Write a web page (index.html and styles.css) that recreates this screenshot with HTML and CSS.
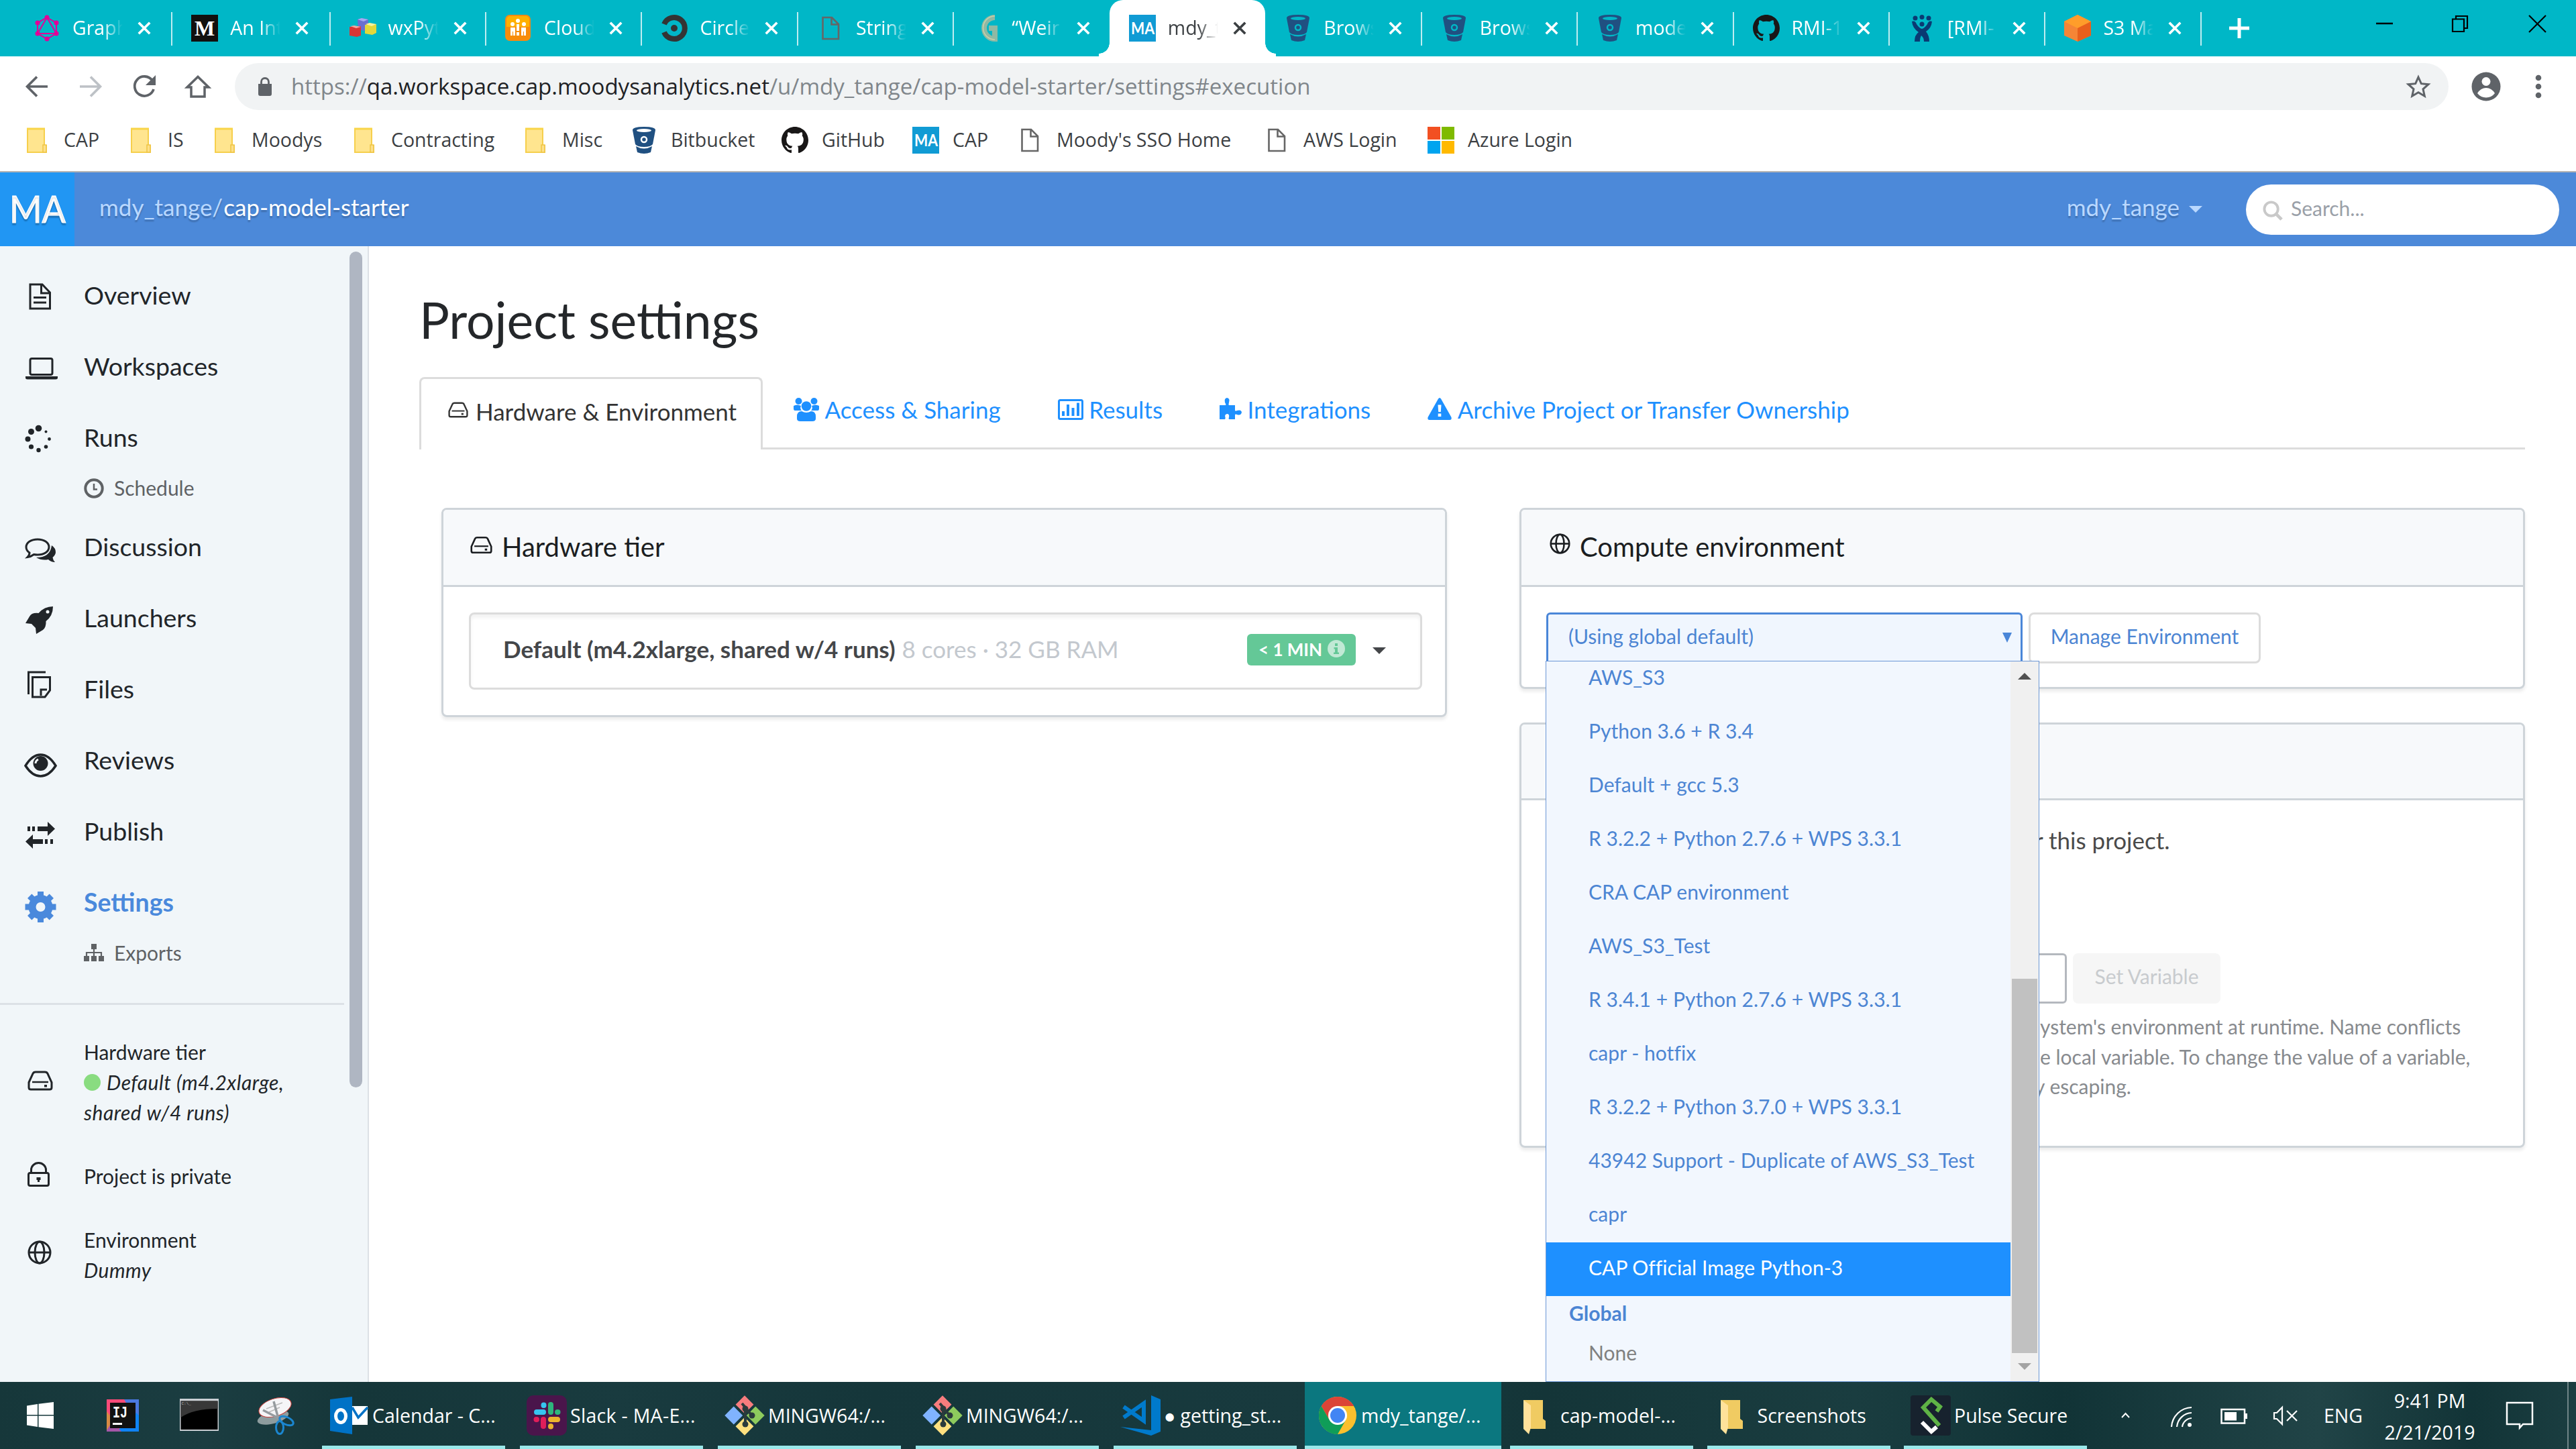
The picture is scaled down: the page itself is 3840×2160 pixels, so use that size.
FILE: index.html
```html
<!DOCTYPE html>
<html lang="en">
<head>
<meta charset="utf-8">
<title>mdy_tange/cap-model-starter</title>
<link rel="stylesheet" href="styles.css">
</head>
<body>
<svg class="sprite" aria-hidden="true">
  <symbol id="close" viewBox="0 0 24 24"><path d="M3 3L21 21M21 3L3 21" fill="none" stroke="currentColor" stroke-width="4"/></symbol>
  <symbol id="page" viewBox="0 0 40 40"><path d="M8.5 4H22L32 14V36H8.5ZM21.500 4V14.500H32" fill="none" stroke="#666" stroke-width="2.600"/></symbol>
  <symbol id="bucket" viewBox="0 0 40 40"><path fill="#205081" d="M3 5Q3 0 20 0T37 5L33 26Q30 30 20 30T7 26Z"/><ellipse cx="20" cy="5.500" rx="11" ry="2.500" fill="var(--hole)"/><circle cx="20" cy="19" r="4" fill="none" stroke="var(--hole)" stroke-width="2.500"/><path fill="#205081" d="M8 29Q20 36 32 29L30 38Q20 42 10 38Z"/></symbol>
  <symbol id="github" viewBox="0 0 16 16"><path fill="#191717" d="M8 0C3.58 0 0 3.580 0 8c0 3.540 2.290 6.530 5.470 7.590.4.070.55-.17.55-.38 0-.19-.01-.82-.01-1.490-2.010.37-2.530-.49-2.690-.94-.09-.23-.48-.94-.82-1.130-.28-.15-.68-.52-.01-.53.63-.01 1.080.58 1.230.82.72 1.210 1.870.87 2.330.66.070-.52.28-.87.51-1.070-1.780-.2-3.640-.89-3.640-3.950 0-.87.31-1.590.82-2.150-.08-.2-.36-1.020.08-2.120 0 0 .67-.21 2.200.82.64-.18 1.320-.27 2-.27s1.360.09 2 .27c1.530-1.040 2.200-.82 2.200-.82.44 1.100.16 1.920.08 2.120.51.56.82 1.270.82 2.150 0 3.070-1.870 3.750-3.650 3.950.29.25.54.73.54 1.480 0 1.070-.01 1.930-.01 2.200 0 .21.15.46.55.38A8.010 8.010 0 0 0 16 8c0-4.420-3.580-8-8-8z"/></symbol>
  <symbol id="ma" viewBox="0 0 40 40"><path fill="#109bd4" d="M0 0H40V40H0Z"/><text x="3" y="29" font-family="Lato,sans-serif" font-weight="bold" font-size="24" fill="#fff" textLength="35" lengthAdjust="spacingAndGlyphs">MA</text></symbol>
  <symbol id="folder" viewBox="0 0 40 40"><path d="M6 3H31V28H34V38H6Z" fill="#ffe58f" stroke="#f6cf4c" stroke-width="2"/><path d="M5 3H32" stroke="#f9d548" stroke-width="3"/><path d="M29 27H34V38H29Z" fill="#fde08a" stroke="#efc545" stroke-width="1.500"/></symbol>
  <symbol id="hdd" viewBox="0 0 38 30"><path d="M2 17.500L8 4.500Q9 2 12 2H26Q29 2 30 4.500L36 17.500V25Q36 28 33 28H5Q2 28 2 25Z" fill="none" stroke="currentColor" stroke-width="3"/><path d="M7 17H31" stroke="currentColor" stroke-width="2.500"/><path d="M25 21H29V24.500H25Z" fill="currentColor"/></symbol>
  <symbol id="globe" viewBox="0 0 36 36"><g fill="none" stroke="currentColor" stroke-width="3"><circle cx="18" cy="18" r="16"/><ellipse cx="18" cy="18" rx="7" ry="16"/><path d="M2 18H34"/></g></symbol>
  <symbol id="git" viewBox="0 0 60 60"><g transform="rotate(45 30 30)"><path d="M9 9H28V28H9Z" fill="#f77c7e"/><path d="M32 9H51V28H32Z" fill="#8ecb5d"/><path d="M9 32H28V51H9Z" fill="#80b3ff"/><path d="M32 32H51V51H32Z" fill="#ffe07f"/></g><path d="M26 12L31 18V44M31 19L40 29" stroke="#2b3a3c" stroke-width="4" fill="none"/><g fill="#2b3a3c"><circle cx="31" cy="20" r="4.500"/><circle cx="41" cy="30" r="4.500"/><circle cx="31" cy="43" r="4.500"/></g></symbol>
  <symbol id="winfolder" viewBox="0 0 60 60"><path d="M10 7H39V35L43 38V50H14Z" fill="#f0cb62"/><path d="M10 7L21 15V48L18 58L10 50Z" fill="#ffe29b"/></symbol>
</svg>

<header class="tabs">
  <div class="tab wide"><svg viewBox="0 0 40 40"><g fill="none" stroke="#e10098" stroke-width="2"><path d="M20 4L34 12V28L20 36L6 28V12ZM20 4L34 28H6Z"/></g><g fill="#e10098"><circle cx="20" cy="4" r="3.500"/><circle cx="34" cy="12" r="3.500"/><circle cx="34" cy="28" r="3.500"/><circle cx="20" cy="36" r="3.500"/><circle cx="6" cy="28" r="3.500"/><circle cx="6" cy="12" r="3.500"/></g></svg><span class="name">Graph</span><svg class="x"><use href="#close"/></svg></div>
  <div class="tab wide"><svg viewBox="0 0 40 40"><path fill="#12100e" d="M0 0H40V40H0Z"/><text x="20" y="31" text-anchor="middle" font-family="Liberation Serif,serif" font-weight="bold" font-size="32" fill="#fff">M</text></svg><span class="name">An Int</span><svg class="x"><use href="#close"/></svg></div>
  <div class="tab"><svg viewBox="0 0 40 40"><path fill="#6a6fd0" d="M12 7L18 5L28 7V21L21 24L13 21Z"/><path fill="#a5a9f0" d="M12 7L18 5L28 7L21 10Z"/><path fill="#d93535" d="M0 18L17 17V31L11 33L0 31Z"/><path fill="#f4a7a0" d="M1 17L7 16L17 18L10 20Z"/><path fill="#e2d83a" d="M23 15L40 14V27L34 30L23 28Z"/><path fill="#f6f2a0" d="M24 14L30 12L40 14L33 17Z"/></svg><span class="name">wxPyt</span><svg class="x"><use href="#close"/></svg></div>
  <div class="tab"><svg viewBox="0 0 40 40"><rect x="1" y="1" width="36" height="37" rx="6" fill="#ffb000" stroke="#f58a12" stroke-width="2"/><path fill="#f78c0a" d="M2 18H36V30Q36 37 30 37H8Q2 37 2 30Z"/><g fill="#fff"><circle cx="19" cy="9" r="3"/><circle cx="11" cy="14" r="3"/><circle cx="28" cy="14" r="3"/><path d="M17 14H21V24H17ZM8 19H15V31H12V25H11V31H8ZM24 19H31V31H28V25H27V31H24ZM17 26H21V31H17Z"/></g></svg><span class="name">Cloud</span><svg class="x"><use href="#close"/></svg></div>
  <div class="tab"><svg viewBox="0 0 40 40"><path d="M5 14A16 16 0 1 1 5 26" fill="none" stroke="#343434" stroke-width="8"/><circle cx="20" cy="20" r="5" fill="#343434"/></svg><span class="name">Circle</span><svg class="x"><use href="#close"/></svg></div>
  <div class="tab"><svg><use href="#page"/></svg><span class="name">String</span><svg class="x"><use href="#close"/></svg></div>
  <div class="tab"><svg viewBox="0 0 40 40"><path d="M33 4A16 16 0 1 0 33 36V20H24" fill="none" stroke="#8fb9a4" stroke-width="8"/><path d="M33 2A17 17 0 0 0 33 37" fill="none" stroke="#c9cfa9" stroke-width="1.500"/></svg><span class="name">“Weir</span><svg class="x"><use href="#close"/></svg></div>
  <div class="tab active"><svg><use href="#ma"/></svg><span class="name">mdy_t</span><svg class="x"><use href="#close"/></svg></div>
  <div class="tab"><svg><use href="#bucket"/></svg><span class="name">Brows</span><svg class="x"><use href="#close"/></svg></div>
  <div class="tab"><svg><use href="#bucket"/></svg><span class="name">Brows</span><svg class="x"><use href="#close"/></svg></div>
  <div class="tab"><svg><use href="#bucket"/></svg><span class="name">mode</span><svg class="x"><use href="#close"/></svg></div>
  <div class="tab"><svg><use href="#github"/></svg><span class="name">RMI-1</span><svg class="x"><use href="#close"/></svg></div>
  <div class="tab"><svg viewBox="0 0 40 40"><g fill="#0a3a73"><circle cx="10" cy="5" r="3.500"/><circle cx="20" cy="3.500" r="3.500"/><circle cx="30" cy="5" r="3.500"/><path d="M5 10Q10 8 12 14Q16 20 20 21Q24 20 28 14Q30 8 35 10Q34 20 26 25Q31 31 31 40H23Q23 34 19 31Q17 34 17 40H9Q9 30 15 26Q6 20 5 10Z"/><circle cx="20" cy="14" r="3.500"/></g></svg><span class="name">[RMI-</span><svg class="x"><use href="#close"/></svg></div>
  <div class="tab"><svg viewBox="0 0 40 40"><path fill="#f58536" d="M0 10L20 0L40 10V31L20 40L0 31Z"/><path fill="#ff9d2a" d="M0 10L20 0L40 10L20 20Z"/><path fill="#e8601c" d="M20 20L40 10V31L20 40Z"/></svg><span class="name">S3 Ma</span><svg class="x"><use href="#close"/></svg></div>
  <svg class="newtab" viewBox="0 0 32 32"><path d="M16 1V31M1 16H31" stroke="#fff" stroke-width="5"/></svg>
  <svg class="winctl" viewBox="0 0 260 84"><path d="M3 35H28" stroke="#000" stroke-width="2.500"/><path d="M117 28.500H134V47H117ZM122 28V24H139V42H135" fill="none" stroke="#000" stroke-width="2.200"/><path d="M231 23L256 48M256 23L231 48" stroke="#000" stroke-width="2.200"/></svg>
</header>

<nav class="toolbar">
  <svg class="tool" viewBox="0 0 60 60"><path d="M46 30H16M30 15.500L15.500 30L30 44.500" fill="none" stroke="#5f6368" stroke-width="3.600"/></svg>
  <svg class="tool" viewBox="0 0 60 60"><path d="M14 30H44M30 15.500L44.500 30L30 44.500" fill="none" stroke="#bdc1c6" stroke-width="3.600"/></svg>
  <svg class="tool" viewBox="0 0 60 60"><path d="M42 21A14.500 14.500 0 1 0 44 34" fill="none" stroke="#5f6368" stroke-width="3.800"/><path d="M47 13V28H32Z" fill="#5f6368"/></svg>
  <svg class="tool" viewBox="0 0 60 60"><path d="M14 31H20V45H40V31H46L30 15.500Z" fill="none" stroke="#5f6368" stroke-width="3.500"/></svg>
  <div class="omnibox">
    <svg class="lock" viewBox="0 0 20 28"><path d="M0 10H20V25Q20 28 17 28H3Q0 28 0 25Z" fill="#5f6368"/><path d="M4.500 11V7A5.500 5.500 0 0 1 15.500 7V11" fill="none" stroke="#5f6368" stroke-width="2.800"/></svg>
    <span class="url">https://<b>qa.workspace.cap.moodysanalytics.net</b>/u/mdy_tange/cap-model-starter/settings#execution</span>
    <svg class="star" viewBox="0 0 36 36"><path d="M18 4L22.300 13.700L33 14.700L25 21.800L27.300 32.200L18 26.700L8.700 32.200L11 21.800L3 14.700L13.700 13.700Z" fill="none" stroke="#5f6368" stroke-width="3"/></svg>
  </div>
  <svg class="profile" viewBox="0 0 44 44"><circle cx="22" cy="22" r="21.500" fill="#5f6368"/><circle cx="22" cy="14.500" r="6.500" fill="#fff"/><path d="M9 32Q14 24 22 24T35 32Q30 38.500 22 38.500T9 32Z" fill="#fff"/></svg>
  <svg class="dots" viewBox="0 0 10 36"><g fill="#5f6368"><circle cx="5" cy="5" r="4.300"/><circle cx="5" cy="18" r="4.300"/><circle cx="5" cy="31" r="4.300"/></g></svg>
</nav>

<nav class="bookmarks">
  <span><svg><use href="#folder"/></svg>CAP</span>
  <span><svg><use href="#folder"/></svg>IS</span>
  <span><svg><use href="#folder"/></svg>Moodys</span>
  <span><svg><use href="#folder"/></svg>Contracting</span>
  <span><svg><use href="#folder"/></svg>Misc</span>
  <span><svg><use href="#bucket"/></svg>Bitbucket</span>
  <span><svg><use href="#github"/></svg>GitHub</span>
  <span><svg><use href="#ma"/></svg>CAP</span>
  <span><svg><use href="#page"/></svg>Moody's SSO Home</span>
  <span><svg><use href="#page"/></svg>AWS Login</span>
  <span><svg viewBox="0 0 40 40"><path fill="#f25022" d="M0 0H19V19H0Z"/><path fill="#7fba00" d="M21 0H40V19H21Z"/><path fill="#00a4ef" d="M0 21H19V40H0Z"/><path fill="#ffb900" d="M21 21H40V40H21Z"/></svg>Azure Login</span>
</nav>

<header class="appbar">
  <div class="logo"><svg viewBox="0 0 111 110"><text x="14" y="75" font-family="Lato,sans-serif" font-size="56" fill="#fff" stroke="#fff" stroke-width="1.200" textLength="84" lengthAdjust="spacingAndGlyphs">MA</text></svg></div>
  <div class="crumb">mdy_tange/<b>cap-model-starter</b></div>
  <div class="user">mdy_tange<i class="caret"></i></div>
  <div class="search"><svg viewBox="0 0 32 32"><circle cx="13" cy="13" r="10.500" fill="none" stroke="#c9c9c9" stroke-width="4"/><path d="M20 20L29 29" stroke="#c9c9c9" stroke-width="5"/></svg><span>Search...</span></div>
</header>

<div class="page">
  <aside class="side">
    <ul class="menu">
      <li><svg viewBox="0 0 60 60"><path d="M15 14H33L44.500 26V50H15ZM31.500 14V27H44.500M20 33.500H39M20 41H39" fill="none" stroke="currentColor" stroke-width="3"/></svg>Overview</li>
      <li><svg viewBox="0 0 60 60"><rect x="15" y="18.500" width="33" height="24" rx="2.500" fill="none" stroke="currentColor" stroke-width="3"/><path d="M8 45H56V47Q56 49.500 53 49.500H11Q8 49.500 8 47Z" fill="currentColor"/></svg>Workspaces</li>
      <li><svg viewBox="0 0 60 60" fill="currentColor"><circle cx="27.500" cy="16.500" r="4.800"/><circle cx="16.500" cy="21.500" r="4.500"/><circle cx="11.500" cy="32.500" r="4"/><circle cx="16.500" cy="44" r="3.600"/><circle cx="27.500" cy="49" r="3.200"/><circle cx="38.500" cy="44" r="2.800"/><circle cx="43.500" cy="32.500" r="2.400"/><circle cx="38.500" cy="21.500" r="2"/></svg>Runs</li>
      <li class="sub"><svg viewBox="0 0 30 30"><circle cx="15" cy="15" r="12.700" fill="none" stroke="currentColor" stroke-width="4"/><path d="M15 8V16.500H20" fill="none" stroke="currentColor" stroke-width="2.500"/></svg>Schedule</li>
      <li><svg viewBox="0 0 60 60"><path d="M26 19C36 19 43 24 43 30.500S36 42 26 42Q23 42 20.500 41.500Q16 45 11 45.500Q14 42.500 14 39Q9 35.500 9 30.500C9 24 16 19 26 19Z" fill="none" stroke="currentColor" stroke-width="3"/><path d="M47 28Q53 32 53 38Q53 42 48.500 46Q49 50 52 53Q46 53 42 49Q32 51 24 46Q45 46 47 28Z" fill="currentColor"/></svg>Discussion</li>
      <li><svg viewBox="0 0 60 60"><path fill="currentColor" d="M49 13Q36 13 27.500 23Q17 22 14 28L8 38L17 39L23 45L24 54L34 48Q39 44 38.500 35Q49 27 49 13Z"/><circle cx="41" cy="21" r="2.500" fill="#f1f6f9"/></svg>Launchers</li>
      <li><svg viewBox="0 0 60 60"><path d="M12.500 38V5H38M18.500 12.500H44.500V32L37 42H18.500ZM31 40V31H40" fill="none" stroke="currentColor" stroke-width="3"/></svg>Files</li>
      <li><svg viewBox="0 0 60 60"><path d="M8 38.500Q18 22 30.500 22T53 38.500Q43 54 30.500 54T8 38.500Z" fill="none" stroke="currentColor" stroke-width="3.500"/><circle cx="30.500" cy="35" r="11" fill="currentColor"/><path d="M23 35Q23 31 27 29" stroke="#f1f6f9" stroke-width="3" fill="none"/></svg>Reviews</li>
      <li><svg viewBox="0 0 60 60" fill="currentColor"><path d="M26 23H41V16L52 26.500L41 37V30H26ZM18 23H22V30H18ZM11 23H15V30H11ZM34 42H19V35L8 45.500L19 56V49H34ZM37 42H41V49H37ZM45 42H49V49H45Z"/></svg>Publish</li>
      <li class="current"><svg viewBox="0 0 60 60"><circle cx="30.500" cy="37" r="12.500" fill="none" stroke="currentColor" stroke-width="11"/><g stroke="currentColor" stroke-width="9"><path d="M30.500 14V22M30.500 52V60M7.500 37H15M46 37H53.500M14.200 20.700L20 26.500M41 47.500L46.800 53.300M46.800 20.700L41 26.500M20 47.500L14.200 53.300"/></g></svg>Settings</li>
      <li class="sub"><svg viewBox="0 0 30 30"><path fill="currentColor" d="M11 1H19V9H11ZM0 19H8V27H0ZM11 19H19V27H11ZM22 19H30V27H22Z"/><path d="M15 9V19M4 19V14H26V19" fill="none" stroke="currentColor" stroke-width="2.200"/></svg>Exports</li>
    </ul>
    <ul class="info">
      <li><svg class="i-hdd"><use href="#hdd"/></svg><div>Hardware tier<br><em><i class="ok"></i>Default (m4.2xlarge,<br>shared w/4 runs)</em></div></li>
      <li><svg class="i-lock" viewBox="0 0 33 37"><rect x="1.500" y="16.500" width="30" height="19" rx="2.500" fill="none" stroke="currentColor" stroke-width="3"/><path d="M5.500 16V12A11 10.500 0 0 1 27.500 12V16" fill="none" stroke="currentColor" stroke-width="3"/><path d="M13.500 23H19.500V27H18V30H15V27H13.500Z" fill="currentColor"/></svg><div>Project is private</div></li>
      <li><svg class="i-globe"><use href="#globe"/></svg><div>Environment<br><em>Dummy</em></div></li>
    </ul>
    <div class="thumb"></div>
  </aside>

  <main class="main">
    <h1>Project settings</h1>
    <nav class="sections">
      <a class="on"><svg class="s-hdd"><use href="#hdd"/></svg>Hardware &amp; Environment</a>
      <a><svg class="s-users" viewBox="0 0 38 35" fill="currentColor"><circle cx="7.500" cy="5" r="5"/><circle cx="30.500" cy="5" r="5"/><path d="M0 12Q5 9 11 12Q9 16 12 19H2Q0 19 0 16ZM38 12Q33 9 27 12Q29 16 26 19H36Q38 19 38 16Z"/><circle cx="19" cy="12.500" r="7.300"/><path d="M5 28Q5 20 12 20Q19 24 26 20Q33 20 33 28V31Q33 35 28 35H10Q5 35 5 31Z"/></svg>Access &amp; Sharing</a>
      <a><svg class="s-chart" viewBox="0 0 38 31"><rect x="1.500" y="1.500" width="35" height="28" rx="2" fill="none" stroke="currentColor" stroke-width="3"/><path fill="currentColor" d="M6 18H10V25H6ZM13 8H17V25H13ZM20.500 13H24.500V25H20.500ZM28 5.500H32V25H28Z"/></svg>Results</a>
      <a><svg class="s-puzzle" viewBox="0 0 33 33"><path fill="currentColor" d="M0 11H9Q10 10 8 7Q6.500 1 11 0Q16 1 14 7Q13 10 14 11H23V19Q24 20 26 19Q32 17 33 21.500Q32 27 26 25Q24 24 23 25V32H14Q13 31 14 29Q15 24 11 24Q7 25 8.500 29Q9 31 8 32H0Z"/></svg>Integrations</a>
      <a><svg class="s-warn" viewBox="0 0 36 33"><path fill="currentColor" d="M16 1.500Q18-1.500 20 1.500L35.500 29Q36.500 33 33 33H3Q-.5 33 .5 29Z"/><path fill="#fff" d="M15.500 10.500H20.500L19.800 21H16.200ZM15.700 23.500H20.300V28H15.700Z"/></svg>Archive Project or Transfer Ownership</a>
    </nav>
    <div class="cols">
      <div class="col">
        <section class="card">
          <h2><svg class="c-hdd"><use href="#hdd"/></svg>Hardware tier</h2>
          <div class="body">
            <div class="tier"><b>Default (m4.2xlarge, shared w/4 runs)</b><span class="spec">8 cores · 32 GB RAM</span>
              <span class="badge">&lt; 1 MIN<svg viewBox="0 0 26 26"><circle cx="13" cy="13" r="13" fill="#c1e9d5"/><path fill="#64c897" d="M11 5H15V9H11ZM9.500 11H15V18.500H17V21H9V18.500H11V13.500H9.500Z"/></svg></span><i class="caret"></i></div>
          </div>
        </section>
      </div>
      <div class="col">
        <section class="card compute">
          <h2><svg class="c-globe"><use href="#globe"/></svg>Compute environment</h2>
          <div class="body">
            <div class="select">(Using global default)<i class="tri"></i></div>
            <div class="btn">Manage Environment</div>
          </div>
          <div class="dropdown">
            <ul class="options">
              <li>AWS_S3</li><li>Python 3.6 + R 3.4</li><li>Default + gcc 5.3</li><li>R 3.2.2 + Python 2.7.6 + WPS 3.3.1</li><li>CRA CAP environment</li><li>AWS_S3_Test</li><li>R 3.4.1 + Python 2.7.6 + WPS 3.3.1</li><li>capr - hotfix</li><li>R 3.2.2 + Python 3.7.0 + WPS 3.3.1</li><li>43942 Support - Duplicate of AWS_S3_Test</li><li>capr</li><li class="hot">CAP Official Image Python-3</li><li class="group">Global</li><li class="none">None</li>
            </ul>
            <div class="bar"><i class="up"></i><i class="grip"></i><i class="down"></i></div>
          </div>
        </section>
        <section class="card vars">
          <h2></h2>
          <div class="body">
            <p class="lead">r this project.</p>
            <div class="form"><div class="input"></div><div class="setvar">Set Variable</div></div>
            <p class="help"><span>ystem's environment at runtime. Name conflicts</span><span>e local variable. To change the value of a variable,</span><span>y escaping.</span></p>
          </div>
        </section>
      </div>
    </div>
  </main>
</div>

<footer class="taskbar">
  <svg class="t-start" viewBox="0 0 40 40"><path fill="#fff" d="M0 5.500L16 3V19H0ZM17.500 2.800L40 0V19H17.500ZM0 20.500H16V37L0 34.500ZM17.500 20.500H40V40L17.500 37.200Z"/></svg>
  <svg class="t-ij" viewBox="0 0 48 48"><path fill="#fc4a78" d="M0 0H48V48H0Z"/><path fill="#4b78e0" d="M26 0H48V48H14L40 24Z"/><path fill="#0f83f5" d="M44 20L48 24V48H16Z"/><path fill="#d78a45" d="M0 18L10 30L4 48H0Z"/><path fill="#a557a8" d="M0 46L8 34L22 48H0Z"/><path fill="#111" d="M5 5H43V43H5Z"/><text x="9" y="27" font-family="Liberation Mono,monospace" font-weight="bold" font-size="24" fill="#fff" textLength="22" lengthAdjust="spacingAndGlyphs">IJ</text><path fill="#fff" d="M9 35H23V38H9Z"/></svg>
  <svg class="t-cmd" viewBox="0 0 58 48"><path fill="#c9ced3" d="M0 0H58V48H0Z"/><path fill="#000" d="M1.500 3.500H56.500V46H1.500Z"/><path fill="#383838" d="M1.500 3.500H56.500V15Q20 15 1.500 28Z"/><text x="2.500" y="9" font-family="Liberation Mono,monospace" font-size="6" fill="#bbb">C:\_</text></svg>
  <svg class="t-snip" viewBox="0 0 56 56"><ellipse cx="24" cy="30" rx="24" ry="9" transform="rotate(-15 24 30)" fill="#8d9c9e"/><ellipse cx="27" cy="15" rx="25" ry="13" transform="rotate(-18 27 15)" fill="#f5f5f7" stroke="#c9403c" stroke-width="1"/><path d="M14 17L38 8M18 22L34 15" stroke="#bbb" stroke-width="1.500"/><path d="M25 6L32 32M9 19L38 34" stroke="#969b9f" stroke-width="3.500"/><ellipse cx="44" cy="35" rx="11" ry="5.500" transform="rotate(25 44 35)" fill="none" stroke="#1b86d0" stroke-width="3"/><ellipse cx="34" cy="45" rx="5.500" ry="9.500" fill="none" stroke="#1b86d0" stroke-width="3"/></svg>
  <div class="apps">
    <div class="app"><svg viewBox="0 0 60 60"><path fill="#0072c6" d="M2 6L35 2V58L2 53Z"/><path fill="#fff" d="M35 16H58V44H35Z"/><path d="M35 18L44 33L58 18" fill="none" stroke="#0072c6" stroke-width="3.500"/><ellipse cx="18" cy="31" rx="7.500" ry="9.500" fill="none" stroke="#fff" stroke-width="5"/></svg>Calendar - C...</div>
    <div class="app slack"><svg viewBox="0 0 60 60"><rect width="60" height="60" rx="10" fill="#4a154b"/><g stroke-width="8" stroke-linecap="round"><path d="M15 25H25M25.500 14.500V15" stroke="#36c5f0"/><path d="M36 14V25M46 25H46.500" stroke="#2eb67d"/><path d="M36 36H46M36 46V46.500" stroke="#ecb22e"/><path d="M25 36V46M14.500 36H15" stroke="#e01e5a"/></g></svg>Slack - MA-E...</div>
    <div class="app"><svg><use href="#git"/></svg>MINGW64:/...</div>
    <div class="app"><svg><use href="#git"/></svg>MINGW64:/...</div>
    <div class="app"><svg viewBox="0 0 60 60"><path fill="#007acc" d="M46 0L60 6V54L46 60L0 47L46 52Z"/><path d="M5 17L35 38V12L5 33" fill="none" stroke="#007acc" stroke-width="6"/></svg>● getting_st...</div>
    <div class="app open"><svg viewBox="0 0 60 60"><circle cx="30" cy="30" r="28" fill="#fbc02d"/><path fill="#db4437" d="M5.700 16A28 28 0 0 1 54.300 16H30L18 37Z"/><path fill="#0f9d58" d="M5.700 16A28 28 0 0 0 30 58L42 37L18 37Z"/><circle cx="30" cy="30" r="14" fill="#fff"/><circle cx="30" cy="30" r="11" fill="#4285f4"/></svg>mdy_tange/...</div>
    <div class="app"><svg><use href="#winfolder"/></svg>cap-model-...</div>
    <div class="app"><svg><use href="#winfolder"/></svg>Screenshots</div>
    <div class="app"><svg viewBox="0 0 60 60"><rect width="60" height="60" rx="4" fill="#17222e"/><path d="M39 24L44 17L31 6L19 18L43 45" fill="none" stroke="#5fb346" stroke-width="6"/><path d="M17 40L31 54L39 47" fill="none" stroke="#fff" stroke-width="6"/></svg>Pulse Secure</div>
  </div>
  <svg class="tray" viewBox="3150 2060 290 100" fill="none" stroke="#fff"><path d="M3163 2113L3168.500 2107L3174 2113" stroke-width="2"/><path d="M3237 2127A31 31 0 0 1 3267 2098M3245 2127A23 23 0 0 1 3267 2106M3253 2127A15 15 0 0 1 3267 2114" stroke-width="2.200"/><circle cx="3264" cy="2124" r="3" fill="#fff" stroke="none"/><path d="M3311.500 2101H3346V2121.500H3311.500Z" stroke-width="2.500"/><path d="M3316 2105H3334V2117.500H3316ZM3347 2107H3350V2115H3347Z" fill="#fff" stroke="none"/><path d="M3390 2106H3394L3402 2098V2123L3394 2115H3390ZM3409 2103L3424 2118M3424 2103L3409 2118" stroke-width="2.200"/></svg>
  <span class="lang">ENG</span>
  <span class="clock">9:41 PM<br>2/21/2019</span>
  <svg class="note" viewBox="0 0 40 40"><path d="M1 1H39V33H25L20 38.500V33H1Z" fill="none" stroke="#fff" stroke-width="2.500"/></svg>
  <i class="peek"></i>
</footer>
</body>
</html>
```
FILE: styles.css
```css
* { box-sizing: border-box; }
body { margin: 0; width: 3840px; height: 2160px; overflow: hidden; background: #fff; font-family: Lato, "Open Sans", sans-serif; color: #212529; display: flex; flex-direction: column; }
ul, p, h1, h2 { margin: 0; padding: 0; list-style: none; font-weight: normal; }
svg { display: block; flex: none; overflow: visible; }
.sprite { width: 0; height: 0; position: absolute; }

/* browser tab strip */
.tabs { height: 84px; flex: none; background: #00b7c7; display: flex; padding-left: 21px; font: 28.5px/82px "Open Sans", sans-serif; color: #fff; --hole: #00b7c7; }
.tab { width: 232.45px; height: 84px; flex: none; display: flex; padding-left: 29px; position: relative; }
.tab.wide { width: 235.3px; }
.tab::after { content: ""; position: absolute; right: -1px; top: 18px; width: 2px; height: 50px; background: rgba(255,255,255,.75); }
.tab:nth-child(7)::after, .tab.active::after { display: none; }
.tab > svg:first-child { width: 40px; height: 40px; margin-top: 22px; }
.name { width: 78px; margin-left: 18px; overflow: hidden; white-space: nowrap; -webkit-mask-image: linear-gradient(90deg, #000 58%, transparent 96%); mask-image: linear-gradient(90deg, #000 58%, transparent 96%); }
.x { width: 22px; height: 22px; margin: 31px 0 0 18px; }
.tab.active { background: #fff; border-radius: 20px 20px 0 0; color: #3c4043; }
.tab.active::before { content: ""; position: absolute; z-index: 1; left: -16px; right: -16px; bottom: 0; height: 20px; background: radial-gradient(circle 16px at 0 0, transparent 15.5px, #fff 16px) 0 100% / 16px 20px no-repeat, radial-gradient(circle 16px at 100% 0, transparent 15.5px, #fff 16px) 100% 100% / 16px 20px no-repeat; }
.newtab { width: 32px; height: 32px; margin: 26px 0 0 41px; }
.winctl { width: 260px; height: 84px; margin-left: auto; margin-right: 41px; }

/* address bar */
.toolbar { height: 90px; flex: none; display: flex; align-items: center; padding-left: 25px; }
.tool { width: 60px; height: 60px; margin-right: 20px; }
.omnibox { width: 3300px; height: 70px; margin-left: 5px; border-radius: 35px; background: #f1f3f4; display: flex; align-items: center; padding: 0 27px 0 35px; font: 33.07px/70px "Open Sans", sans-serif; color: #80868b; }
.url { margin-left: 29px; white-space: nowrap; font-variant-ligatures: none; }
.url b { font-weight: normal; color: #202124; }
.lock { width: 20px; height: 28px; }
.star { width: 36px; height: 36px; margin-left: auto; }
.profile { width: 44px; height: 44px; margin-left: 34px; }
.dots { width: 10px; height: 36px; margin-left: 51px; }

.bookmarks { height: 83px; flex: none; border-bottom: 2px solid #b4b4b4; padding: 14px 0 0 35px; display: grid; grid-template-columns: 155px 125px 208px 255px 162px 225px 195px 155px 368px 245px 300px; font: 28.5px/40px "Open Sans", sans-serif; color: #3c4043; font-variant-ligatures: none; --hole: #fff; }
.bookmarks span { display: flex; gap: 20px; white-space: nowrap; }
.bookmarks svg { width: 40px; height: 40px; margin-top: 1px; }

/* application header */
.appbar { height: 110px; flex: none; background: #4c89d9; display: flex; font-size: 35px; line-height: 102px; color: #b9d8ff; text-shadow: 0 3px 2px rgba(0,0,0,.2); }
.logo { width: 111px; background: #2196f3; }
.logo svg { width: 111px; height: 110px; }
.crumb { margin-left: 37px; }
.crumb b { font-weight: normal; color: #fff; margin-left: 1px; }
.user { margin-left: auto; display: flex; }
.caret { border: 10px solid transparent; border-top-color: currentColor; border-bottom: 0; width: 0; height: 0; }
.user .caret { margin: 50px 49px 0 14px; }
.search { width: 467px; height: 75px; margin: 18px 25px 0 16px; border-radius: 38px; background: #fff; display: flex; padding-left: 25px; font-size: 30px; line-height: 71px; color: #9aa0a8; text-shadow: none; }
.search svg { width: 31px; height: 31px; margin: 24px 11px 0 0; }

.page { height: 1693px; flex: none; display: flex; overflow: hidden; }
.side { width: 550px; height: 1693px; flex: none; background: #f1f6f9; border-right: 2px solid #dce1e6; padding-top: 20px; position: relative; }
.thumb { position: absolute; left: 521px; top: 8px; width: 19px; height: 1246px; border-radius: 10px; background: #afb6c2; }
.menu { font-size: 37.5px; line-height: 106px; }
.menu li { height: 106px; padding-left: 30px; display: flex; align-items: center; }
.menu svg { width: 60px; height: 60px; margin-right: 35px; }
.menu .current { font-weight: bold; color: #4a89dc; }
.menu .sub { height: 57px; padding: 0 0 12px 125px; font-size: 30px; line-height: 45px; color: #5f6265; }
.menu .sub svg { width: 30px; height: 30px; margin-right: 15px; }
.info { width: 513px; margin-top: 40px; border-top: 3px solid #dce1e6; padding-top: 48px; font-size: 30px; line-height: 45px; display: grid; gap: 50px; }
.info li { display: grid; grid-template-columns: 125px 1fr; white-space: nowrap; }
.info em { letter-spacing: .5px; }
.info svg { margin-left: 41px; }
.i-hdd { width: 38px; height: 30px; margin-top: 50px; }
.i-lock { width: 33px; height: 37px; margin-top: 1px; }
.i-globe { width: 36px; height: 36px; margin-top: 23px; }
.ok { display: inline-block; width: 25px; height: 25px; border-radius: 50%; background: #89dc80; margin-right: 9px; vertical-align: -1px; }

.main { flex: 1; padding: 0 76px; }
h1 { font-size: 75px; line-height: 90px; margin-top: 64px; margin-left: -1px; color: #24272a; }
.sections { margin-top: 41px; margin-left: -1px; height: 108px; border-bottom: 3px solid #dcdcdc; display: flex; font-size: 35px; line-height: 42px; color: #1e90ff; }
.sections a { display: flex; white-space: nowrap; padding-top: 27px; margin-right: 85px; }
.sections .on { width: 512px; height: 108px; border: 3px solid #dcdcdc; border-bottom: 0; border-radius: 8px 8px 0 0; background: #fff; color: #333; padding: 27px 0 0 40px; margin-right: 46px; }
.sections svg { margin-right: 8.5px; }
.sections .s-hdd { width: 30px; height: 24px; margin: 7px 11px 0 0; }
.s-users { width: 38px; height: 35px; margin-top: 4px; }
.s-chart { width: 38px; height: 31px; margin-top: 6px; }
.s-puzzle { width: 33px; height: 33px; margin-top: 4px; }
.s-warn { width: 36px; height: 33px; margin-top: 4px; }

.cols { display: flex; justify-content: space-between; margin: 87px 0 0 32px; }
.col { width: 1499px; display: flex; flex-direction: column; gap: 50px; }
.card { border: 3px solid #ced4d9; border-radius: 8px; box-shadow: 0 4px 5px rgba(0,0,0,.08); position: relative; }
.card h2 { height: 115px; background: #f7f9fb; border-bottom: 3px solid #ced4d9; border-radius: 5px 5px 0 0; padding: 31px 0 0 40px; font-size: 40px; line-height: 48px; color: #1b1e21; display: flex; }
.c-hdd { width: 33px; height: 27px; margin: 8px 14px 0 0; }
.c-globe { width: 31px; height: 31px; margin: 4px 14px 0 2px; }
.card .body { padding: 38px 38px; display: flex; }
.tier { width: 1421px; flex: none; height: 115px; border: 3px solid #dcdcdc; border-radius: 8px; box-shadow: inset 0 5px 5px rgba(0,0,0,.05); padding-left: 48px; display: flex; font-size: 35px; line-height: 103px; color: #444649; white-space: nowrap; }
.spec { color: #c3c8ce; margin-left: 10px; }
.badge { width: 162px; height: 47px; margin: 29px 25px 0 auto; border-radius: 6px; background: #64c897; color: #fff; font-weight: bold; font-size: 26px; line-height: 46px; padding-left: 17px; display: flex; }
.badge svg { width: 26px; height: 26px; margin: 9px 0 0 8px; }
.tier .caret { margin: 49px 51px 0 0; }
.card.compute { height: 270px; }
.compute .body { padding-left: 37px; }
.select { width: 710px; height: 76px; border: 3px solid #4a86d8; border-radius: 6px 6px 0 0; background: #f0f6fe; color: #4c85d3; font-size: 30px; line-height: 65px; padding-left: 30px; display: flex; }
.tri { border: 7.5px solid transparent; border-top: 15px solid #4a86d8; border-bottom: 0; height: 0; margin: 27px 13px 0 auto; }
.btn { width: 346px; height: 76px; margin-left: 9px; border: 3px solid #dcdcdc; border-radius: 8px; color: #4c85d3; font-size: 30px; line-height: 65px; text-align: center; }
.dropdown { position: absolute; left: 36px; top: 225px; width: 736px; height: 1075px; z-index: 2; border: 1.500px solid #6b97d6; background: #f2f7fe; display: flex; overflow: hidden; font-size: 30px; color: #4c85d3; }
.options { width: 692px; margin-top: -14px; }
.options li { height: 80px; line-height: 75px; padding-left: 63px; white-space: nowrap; letter-spacing: .03px; font-variant-ligatures: common-ligatures; }
.options .hot { background: #1e90ff; color: #fff; }
.options .group { height: 50px; line-height: 50px; padding-left: 34px; font-weight: bold; }
.options .none { height: 68px; line-height: 68px; color: #808080; }
.bar { flex: 1; background: #f0f0f0; display: flex; flex-direction: column; align-items: center; }
.up { border: 10px solid transparent; border-top: 0; border-bottom-color: #505050; margin-top: 17px; }
.grip { width: 38px; height: 558px; margin: 446px 0 15px; background: #c1c1c1; }
.down { border: 10px solid transparent; border-bottom: 0; border-top-color: #a3a3a3; }
.vars { height: 634px; }
.vars h2 { height: 113px; }
.vars .body { display: block; padding: 38px 0 0 765px; }
.lead { font-size: 35px; line-height: 42px; color: #4a4a4a; margin-top: 0; }
.form { display: flex; gap: 9px; margin-top: 148px; }
.input { width: 48px; height: 75px; border: 3px solid #b4b8be; border-radius: 0 6px 6px 0; }
.setvar { width: 220px; height: 75px; border-radius: 8px; background: #f6f6f6; color: #c8cbce; font-size: 30px; line-height: 69px; text-align: center; }
.help { font-size: 30px; line-height: 44.5px; margin-top: 12px; color: #878a8e; white-space: nowrap; }
.help span { display: block; padding-left: 8px; }
.help span:nth-child(3) { padding-left: 0; }

/* desktop taskbar */
.taskbar { height: 100px; flex: none; background: linear-gradient(90deg, #16373a 0, #1b3d41 8%, #153639 14%, #193b3f 24%, #15363a 34%, #183a3e 50%, #143538 60%, #1a3d40 72%, #113336 80%, #214447 90%, #123437 96%, #1b3e41 100%); display: flex; font: 28.5px/100px "Open Sans", sans-serif; font-variant-ligatures: none; color: #fff; }
.t-start { width: 40px; height: 40px; margin: 30px 0 0 40px; }
.t-ij { width: 48px; height: 48px; margin: 26px 0 0 79px; }
.t-cmd { width: 58px; height: 48px; margin: 25px 0 0 61px; }
.t-snip { width: 56px; height: 56px; margin: 23px 0 0 57px; }
.apps { display: flex; gap: 22px; margin-left: 41px; }
.app { width: 273px; height: 100px; padding-left: 10px; border-bottom: 5px solid #9ae8ea; display: flex; white-space: nowrap; }
.app svg { width: 60px; height: 60px; margin: 20px 5px 0 0; }
.app.slack { letter-spacing: .3px; }
.app.open { width: 293px; margin: 0 -9px 0 -10px; padding-left: 19px; background: #0b777f; }
.app:nth-child(n+8) { margin-left: -1.5px; }
.tray { width: 290px; height: 100px; margin-left: 39px; }
.lang { margin-left: 24px; }
.clock { width: 150px; margin-left: 25px; padding-top: 5px; line-height: 47px; text-align: center; }
.note { width: 40px; height: 40px; margin: 30px 0 0 39px; }
.peek { width: 2px; margin-left: 51px; background: #6f8587; }
```
